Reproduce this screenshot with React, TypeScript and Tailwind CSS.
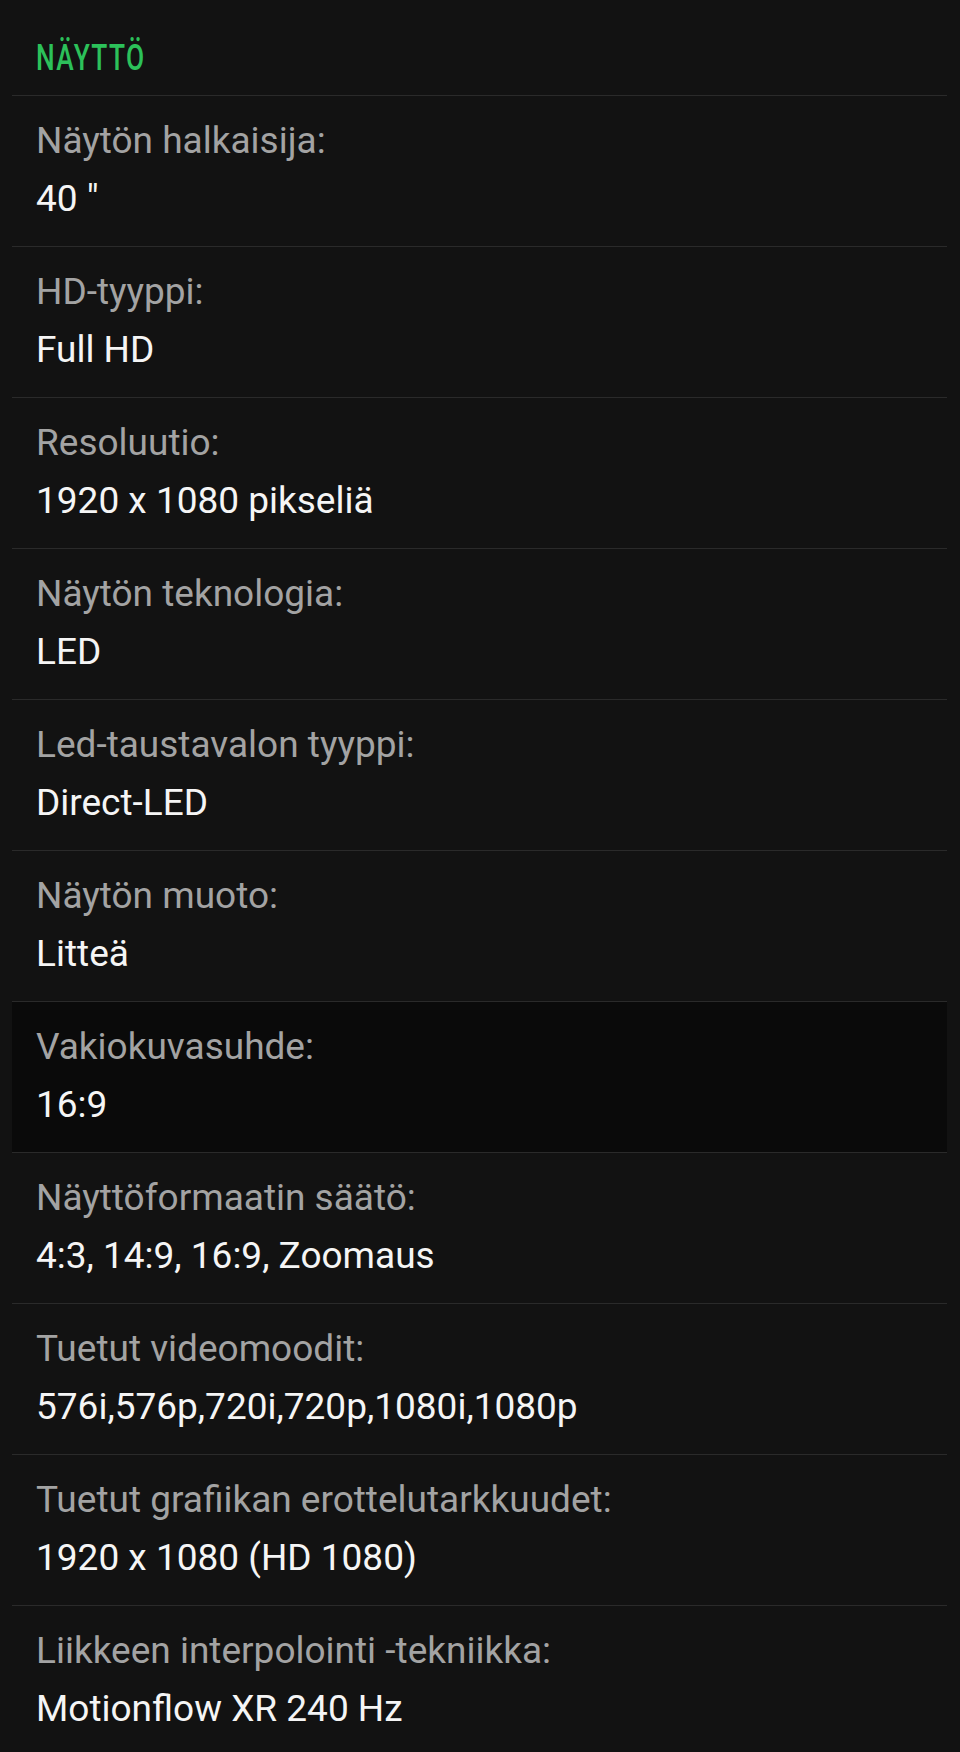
import React from "react";

const specs = [
  { label: "Näytön halkaisija:", value: '40 "' },
  { label: "HD-tyyppi:", value: "Full HD" },
  { label: "Resoluutio:", value: "1920 x 1080 pikseliä" },
  { label: "Näytön teknologia:", value: "LED" },
  { label: "Led-taustavalon tyyppi:", value: "Direct-LED" },
  { label: "Näytön muoto:", value: "Litteä" },
  { label: "Vakiokuvasuhde:", value: "16:9", active: true },
  { label: "Näyttöformaatin säätö:", value: "4:3, 14:9, 16:9, Zoomaus" },
  { label: "Tuetut videomoodit:", value: "576i,576p,720i,720p,1080i,1080p" },
  {
    label: "Tuetut grafiikan erottelutarkkuudet:",
    value: "1920 x 1080 (HD 1080)",
  },
  { label: "Liikkeen interpolointi -tekniikka:", value: "Motionflow XR 240 Hz" },
];

export default function App() {
  return (
    <div className="min-h-screen bg-[#121212] font-['Roboto',sans-serif]">
      <section className="pl-3 pr-[13px]">
        <h3 className="h-[95px] pl-6 pt-[39px]">
          <span className="inline-block origin-left scale-x-[0.71] text-[37px] font-medium leading-none tracking-[2px] text-[#2cc15a]">
            NÄYTTÖ
          </span>
        </h3>

        <ul>
          {specs.map((s) => (
            <li
              key={s.label}
              className={
                s.active
                  ? "border-t border-[#2a2a2a] bg-[#0a0a0a] pl-6 pt-[21px] pb-[23px]"
                  : "border-t border-[#2a2a2a] pl-6 pt-[21px] pb-[23px]"
              }
            >
              <div className="text-[37px] leading-[48px] text-[#a3a3a3]">
                {s.label}
              </div>
              <div className="mt-[10px] text-[37px] leading-[48px] text-[#f5f5f5]">
                {s.value}
              </div>
            </li>
          ))}
        </ul>
      </section>
    </div>
  );
}
